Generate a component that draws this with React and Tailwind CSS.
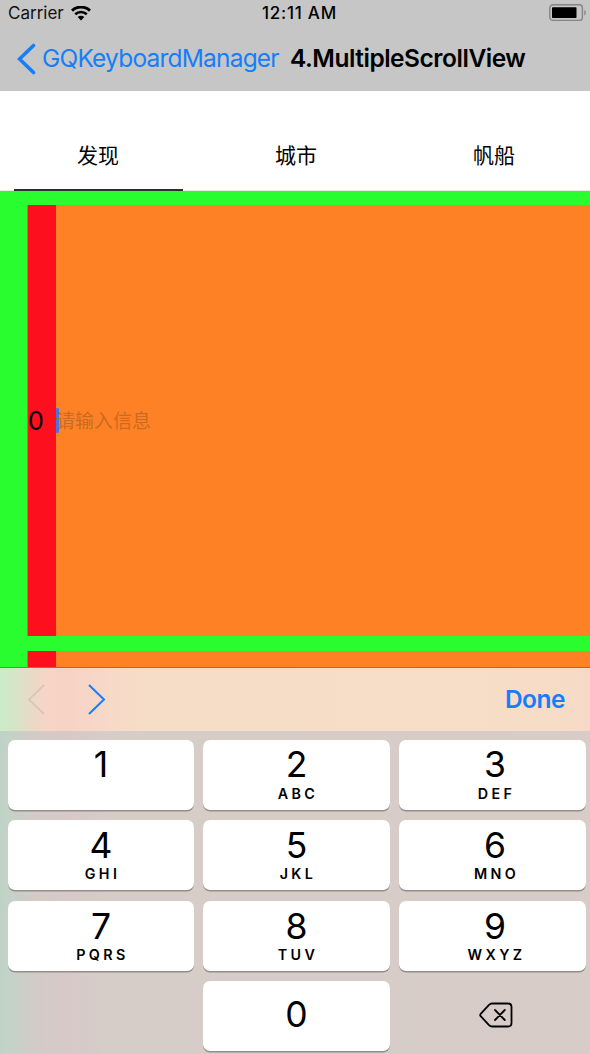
const KEYS = [
  ["1", ""],
  ["2", "ABC"],
  ["3", "DEF"],
  ["4", "GHI"],
  ["5", "JKL"],
  ["6", "MNO"],
  ["7", "PQRS"],
  ["8", "TUV"],
  ["9", "WXYZ"],
];

const TABS = ["发现", "城市", "帆船"];

function WifiIcon() {
  return (
    <svg className="ml-[8px] h-[15px] w-[20px] shrink-0" viewBox="0 0 20 15" fill="none">
      <path d="M1 4.600C6-.100 14-.100 19 4.600" stroke="#000" strokeWidth="2.9" />
      <path d="M4.200 8.300c3.300-3 8.300-3 11.600 0" stroke="#000" strokeWidth="2.6" />
      <path d="M6.700 11c1.900-1.700 4.700-1.700 6.600 0L10 14.400z" fill="#000" />
    </svg>
  );
}

function BatteryIcon() {
  return (
    <svg className="h-[18px] w-[38px] shrink-0" viewBox="0 0 38 18">
      <rect x=".8" y=".8" width="32.6" height="15.6" rx="3.2" fill="none" stroke="#858585" strokeWidth="1.4" />
      <rect x="3" y="3.2" width="24.5" height="10.8" rx=".8" fill="#000" />
      <path d="M35.3 6c2 .9 2 4.5 0 5.4z" fill="#858585" />
    </svg>
  );
}

function Header() {
  return (
    <header className="h-[91px] bg-[#c6c6c6]">
      <div className="grid h-[26px] grid-cols-[1fr_100px_1fr] items-center text-[17px] leading-[26px]">
        <div className="flex items-center pl-[8px]">
          <span className="w-[55px] text-[#111]">Carrier</span>
          <WifiIcon />
        </div>
        <span className="pl-[17px] whitespace-nowrap font-medium tracking-[0.75px]">12:11 AM</span>
        <div className="flex justify-end pr-[3px]">
          <BatteryIcon />
        </div>
      </div>
      <div className="flex h-[65px] items-center pl-[17px] text-[24.5px] leading-[65px] whitespace-nowrap">
        <svg className="h-[32px] w-[19px] shrink-0" viewBox="0 0 19 32" fill="none">
          <path d="M16.500 2.500L2.500 16l14 13.500" stroke="#167efb" strokeWidth="3.6" strokeLinecap="round" />
        </svg>
        <span className="ml-[6px] w-[248px] tracking-[-0.8px] text-[#167efb]">GQKeyboardManager</span>
        <span className="font-semibold tracking-[-0.48px]">4.MultipleScrollView</span>
      </div>
    </header>
  );
}

function Tabs() {
  return (
    <nav className="flex h-[100px] gap-[29px] border-b border-[#dfeedf] bg-white pl-[14px]">
      {TABS.map((t, i) => (
        <div
          key={t}
          className={
            "-mb-px flex w-[169px] flex-col border-b-2 pt-[49px] pr-px text-center font-['Noto_Sans_CJK_SC',sans-serif] text-[21px] leading-[29px] " +
            (i === 0 ? "border-[#27332a]" : "border-transparent")
          }
        >
          {t}
        </div>
      ))}
    </nav>
  );
}

function Cell({ label, children, className }) {
  return (
    <div className={"flex " + className}>
      <div className="flex h-full w-[29px] items-center border-l border-[#a98422] bg-[#fd0f1d] text-[25px]">
        {label && <span className="pt-[3px]">{label}</span>}
      </div>
      <div className="flex h-full flex-1 items-center bg-[#fe8225]">{children}</div>
    </div>
  );
}

function Key({ digit, letters }) {
  return (
    <div className="flex h-[70px] flex-col items-center rounded-[7px] bg-white shadow-[0_1.5px_0_#938d8b]">
      <span className="h-[45px] pt-[5px] text-[35.5px] leading-[40px] group-[&:nth-child(n+4)]:pt-[6px]">{digit}</span>
      <span className="h-[17px] pl-[3px] text-[14.3px] leading-[17px] font-semibold tracking-[3.4px]">{letters}</span>
    </div>
  );
}

function Keyboard() {
  return (
    <section className="flex h-[386px] flex-col">
      <div className="flex h-[63px] items-center justify-between bg-[linear-gradient(90deg,#cbecc8_0px,#d2e7c8_12px,#e0dfc7_24px,#efd7c6_36px,#f6d5c6_46px,#f7d2c6_65px,#f7d6c7_90px,#f6dac7_115px,#f6ddc7_150px,#f7dec8_480px,#f6dac7_590px)] pr-[25px] pl-[27px]">
        <div className="flex gap-[42px]">
          <svg className="h-[32px] w-[19px]" viewBox="0 0 19 32" fill="none">
            <path d="M17 1L2 15.500l15 14.500" stroke="#dbc5b8" strokeWidth="1.8" />
          </svg>
          <svg className="h-[32px] w-[19px]" viewBox="0 0 19 32" fill="none">
            <path d="M1 1L16 15.500 1 30" stroke="#167efb" strokeWidth="2" />
          </svg>
        </div>
        <span className="text-[24.5px] font-semibold tracking-[-0.5px] text-[#167efb]">Done</span>
      </div>
      <div className="grid flex-1 grid-cols-[186px_187px_187px] content-start gap-x-[9px] gap-y-[10.4px] bg-[linear-gradient(90deg,#c0d3c7_0px,#c3d2c7_10px,#cbcec8_22px,#d3cbc7_36px,#d7c9c8_65px,#d6ccc8_110px,#d7cdc8_200px,#d7ccc8_590px)] pt-[9px] pl-[8px]">
        {KEYS.map(([d, l]) => (
          <div key={d} className="group [&:nth-child(3n)_span]:translate-x-[2.5px]">
            <Key digit={d} letters={l} />
          </div>
        ))}
        <div />
        <div className="flex h-[70px] items-center justify-center rounded-[7px] bg-white pb-[2px] text-[35.5px] leading-none shadow-[0_1.5px_0_#938d8b]">
          0
        </div>
        <div className="flex h-[70px] items-center pb-[2px] pl-[80px]">
          <svg className="h-[26px] w-[34px]" viewBox="0 0 34 26" fill="none" stroke="#000" strokeWidth="1.8" strokeLinejoin="round">
            <path d="M13 1.500h16q3.500 0 3.500 3.500v16q0 3.500-3.500 3.500H13q-1.600 0-3-1.300L1.700 14.200q-1-1.200 0-2.400L10 2.800Q11.400 1.500 13 1.500z" />
            <path d="M16 8l9.800 10M25.800 8L16 18" strokeLinecap="round" />
          </svg>
        </div>
      </div>
    </section>
  );
}

export default function App() {
  return (
    <div className="flex h-[1054px] w-[590px] flex-col overflow-hidden bg-white font-[Inter,sans-serif] text-black">
      <Header />
      <Tabs />
      <main className="flex h-[477px] flex-col border-b border-[#c0661f] bg-[#29fd2f] pt-[14px] pl-[27px]">
        <Cell className="h-[431px]" label="0">
          <span className="mt-[-1px] h-[25px] w-[3px] rounded-[1px] bg-[#4872e8]" />
          <span className="-ml-[3px] pb-px font-['Noto_Sans_CJK_SC',sans-serif] text-[19px] text-[#cb6b22]">请输入信息</span>
        </Cell>
        <div className="h-[15px] shrink-0" />
        <Cell className="flex-1" />
      </main>
      <Keyboard />
    </div>
  );
}
